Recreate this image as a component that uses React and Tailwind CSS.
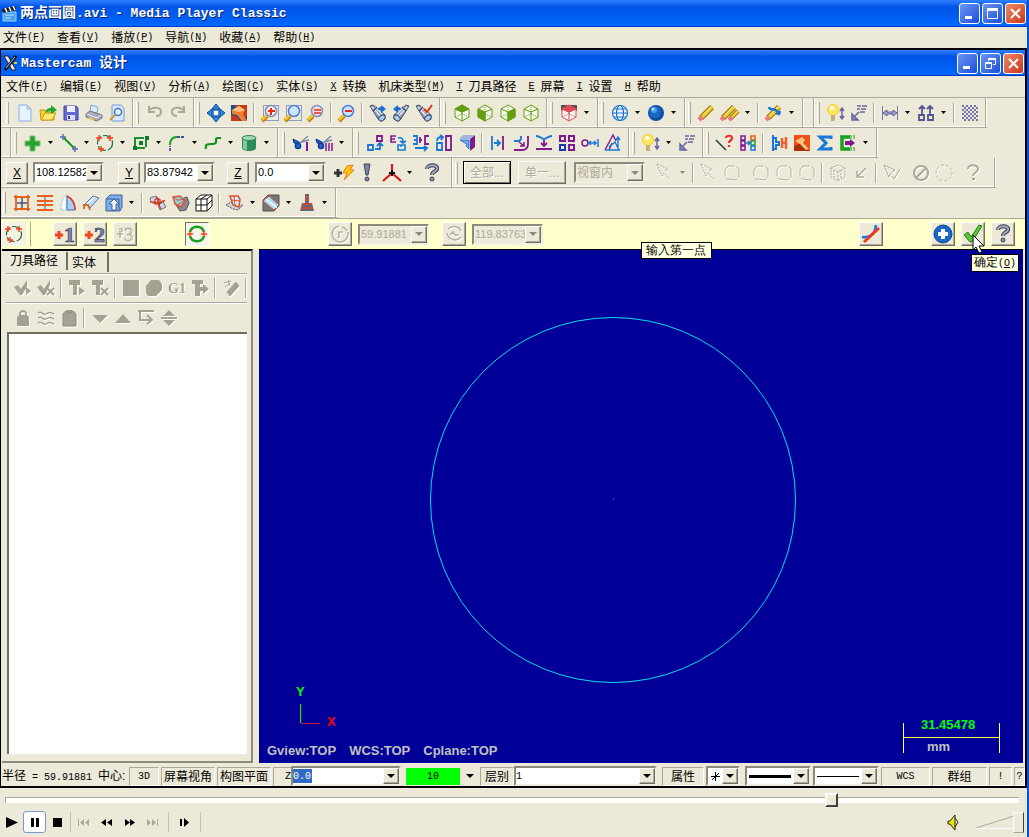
import React from 'react';
import clsx from 'clsx';

const hex = 'M2 5L9 1L16 5V13L9 17L2 13Z';
const cubeLines = 'M2 5L9 8L16 5M9 8V17';

const Lens = ({ color = '#4a7fd8', fill = '#cfe4ff' }) => (
  <>
    <path d="M1 17L6 12" stroke="#b87810" strokeWidth="4" />
    <path d="M1 16L6 11" stroke="#f8c428" strokeWidth="2.500" />
    <circle cx="10" cy="7" r="5.500" fill={fill} stroke={color} strokeWidth="1.500" />
  </>
);

const Binoculars = () => (
  <>
    <path d="M1 2L4 1L8 4L16 11L16 15L12 17L9 15Z" fill="#8c98b4" stroke="#4a5470" />
    <path d="M3 3L12 13M6 3L14 11" stroke="#e4e8f2" strokeWidth="1.500" />
    <path d="M4 7L8 3" stroke="#3c4868" strokeWidth="1.500" />
    <ellipse cx="13" cy="14" rx="3.500" ry="2.500" transform="rotate(-40 13 14)" fill="#a8d0f4" stroke="#3c4868" />
  </>
);

const Cube = ({ face, color = '#62a010' }) => (
  <g stroke={color} fill="none" strokeWidth="1">
    <path d={hex} fill="#f6f7ec" />
    {face && <path d={face} fill={color} />}
    <path d={cubeLines} />
    <path d="M2 13L9 10L16 13M9 1V10" strokeDasharray="1 1" />
  </g>
);

const Pencil = ({ x = 0 }) => (
  <g transform={`translate(${x} 0)`}>
    <path d="M3 14L14 3" stroke="#8c6c10" strokeWidth="5.500" />
    <path d="M4 13L14 3" stroke="#f4cc28" strokeWidth="3.500" />
    <path d="M5 11L13 3" stroke="#fff090" />
    <path d="M1 16L4 13" stroke="#f07880" strokeWidth="4.500" />
  </g>
);

const Plus = ({ x, y, c = '#ff3a10' }) => (
  <path d={`M${x - 3} ${y}h6M${x} ${y - 3}v6`} stroke={c} strokeWidth="1.400" />
);

const Bulb = () => (
  <>
    <circle cx="6" cy="6" r="5.500" fill="#ffe860" stroke="#f0d020" />
    <circle cx="5" cy="4" r="2" fill="#fff" />
    <path d="M4 11h4v6H4z" fill="#c4b078" />
    <path d="M15 4v11M13 7l2-3 2 3M13 12l2 3 2-3" stroke="#6466a0" strokeWidth="1.500" fill="none" />
  </>
);

const Scissors = () => (
  <>
    <path d="M7 10L16 2M6 9L17 6" stroke="#7c8cac" strokeWidth="1.500" />
    <path d="M1 5L7 8L6 10L2 9Z" fill="#1c58c0" stroke="#0a3c98" />
    <circle cx="6" cy="12" r="2.600" fill="#2464cc" stroke="#0a3c98" strokeWidth="1.400" />
  </>
);

const icons = {
  page: <path d="M3 1h8l4 4v12H3zM11 1v4h4" fill="#e6f3ff" stroke="#86aee0" />,
  open: (
    <>
      <path d="M1 6h5l2 2h7v8H2z" fill="#f7d034" stroke="#c69a10" />
      <path d="M2 16L6 9H17L13 16Z" fill="#ffe873" stroke="#c69a10" />
      <path d="M6 9C7 5 9 4 12 4V1L18 6L12 10V7C9 7 8 8 6 9" fill="#28a428" />
    </>
  ),
  save: (
    <>
      <path d="M2 2h12l2 2v12H2z" fill="#6468d0" stroke="#3c40a4" />
      <path d="M5 2h8v6H5z" fill="#eef" />
      <path d="M5 11h8v5H5z" fill="#d8dcf8" />
      <path d="M7 12v3" stroke="#30349c" strokeWidth="2" />
    </>
  ),
  print: (
    <>
      <path d="M5 8L6 1L13 3L12 9Z" fill="#d8ecff" stroke="#7fa8dc" />
      <path d="M1 10L5 7L17 11V14L12 17L1 13Z" fill="#a9acb8" stroke="#70737f" />
      <path d="M2 10L12 14L16 11" stroke="#eef" fill="none" />
      <path d="M4 14L9 16" stroke="#f0d040" strokeWidth="1.500" />
    </>
  ),
  preview: (
    <>
      <path d="M4 1h9l3 3v13H4z" fill="#d6e9ff" stroke="#6f9edc" />
      <circle cx="10" cy="8" r="3.500" fill="#f2faff" stroke="#3f77c4" strokeWidth="1.500" />
      <path d="M7 11L2 16" stroke="#d89820" strokeWidth="2" />
    </>
  ),
  undo: <path d="M3 7C6 2 16 3 15 8C15 11 13 12 10 12M3 2V8H9" fill="none" stroke="#aca899" strokeWidth="2" />,
  redo: <path d="M15 7C12 2 2 3 3 8C3 11 5 12 8 12M15 2V8H9" fill="none" stroke="#aca899" strokeWidth="2" />,
  pan: (
    <>
      <path d="M9 0L13 5H5ZM9 18L13 13H5ZM0 9L5 5V13ZM18 9L13 5V13Z" fill="#2c88e8" stroke="#0c4c9c" />
      <path d="M6 6h6v6H6z" fill="#fff" stroke="#1464b8" strokeWidth="1.500" />
    </>
  ),
  repaint: (
    <>
      <path d="M1 1h16v16H1z" fill="#1c4a94" />
      <path d="M5 1H17V12L12 15L8 12Z" fill="#c83c14" />
      <path d="M2 6L9 2L15 6L13 10L17 17H12L7 11L2 10Z" fill="#f08030" />
      <path d="M2 6L9 2L15 6L9 8Z" fill="#ffc080" />
      <path d="M1 11L6 12L11 17H1Z" fill="#c83c14" />
    </>
  ),
  zoomWindow: (
    <>
      <path d="M2.500 1.500h15v15H2.500z" fill="none" stroke="#2858b0" strokeDasharray="1 1" />
      <Lens color="#7890c8" fill="#ffeee8" />
      <path d="M10 4v7M7 7h7" stroke="#f02810" strokeWidth="2" />
    </>
  ),
  zoomTarget: (
    <>
      <path d="M2.500 1.500h15v15H2.500z" fill="none" stroke="#2858b0" strokeDasharray="1 1" />
      <Lens />
    </>
  ),
  unzoom: (
    <>
      <Lens color="#7890c8" fill="#ffdcd8" />
      <path d="M7 6h7M7 9h7" stroke="#f02820" strokeWidth="1.500" />
    </>
  ),
  unzoomBlue: (
    <>
      <Lens />
      <path d="M7 7h7" stroke="#e02828" strokeWidth="2" />
    </>
  ),
  binoRight: (
    <>
      <Binoculars />
      <path d="M9 6c0-2 1-3 3-3V1l5 4-5 4V6z" fill="#1c6cd0" />
    </>
  ),
  binoLeft: (
    <>
      <g transform="translate(18 0) scale(-1 1)"><Binoculars /></g>
      <path d="M9 6c0-2-1-3-3-3V1L1 5l5 4V6z" fill="#1c6cd0" />
    </>
  ),
  binoCheck: (
    <>
      <Binoculars />
      <path d="M9 5l3 3 5-7" stroke="#d83818" strokeWidth="2" fill="none" />
    </>
  ),
  cubeTop: <Cube face="M2 5L9 1L16 5L9 8Z" />,
  cubeFront: <Cube face="M2 5L9 8V17L2 13Z" />,
  cubeSide: <Cube face="M9 8L16 5V13L9 17Z" />,
  cubeWire: <Cube />,
  cubeRed: (
    <>
      <path d="M1 1h16v6H1z" fill="#555" />
      <Cube color="#e04858" face="M2 5L9 2L16 5L9 8Z" />
    </>
  ),
  globe: (
    <g fill="none" stroke="#1874d0" strokeWidth="1.200">
      <circle cx="9" cy="9" r="7.500" fill="#f2f8ff" />
      <ellipse cx="9" cy="9" rx="3.500" ry="7.500" />
      <path d="M2 9h14M3 5h12M3 13h12" />
    </g>
  ),
  sphere: (
    <>
      <circle cx="9" cy="9" r="8" fill="#0c50a4" />
      <circle cx="8" cy="8" r="6" fill="#1c68c0" />
      <circle cx="7" cy="6" r="3" fill="#4c98e4" />
      <circle cx="6" cy="5" r="1.500" fill="#b4dcff" />
    </>
  ),
  pencil: <Pencil />,
  pencils: (
    <>
      <Pencil x={-1} />
      <path d="M9 15L17 7" stroke="#8c6c10" strokeWidth="4.500" />
      <path d="M10 14L17 7" stroke="#f4cc28" strokeWidth="2.500" />
      <path d="M8 16L11 13" stroke="#f07880" strokeWidth="4" />
    </>
  ),
  pencilUndo: (
    <>
      <Pencil />
      <path d="M4 3C5 8 10 2 13 9M11 9l3 1 1-3" stroke="#1c74d4" strokeWidth="2.500" fill="none" />
    </>
  ),
  bulb: <Bulb />,
  note: (
    <>
      <path d="M7 2h4M12 2h5M7 5h3M11 5h5M10 8h5" stroke="#6466a0" strokeWidth="1.400" />
      <path d="M9 8L4 13M2 10v6h6z" stroke="#6466a0" strokeWidth="1.500" fill="#8a8cc0" />
    </>
  ),
  dim: (
    <>
      <path d="M1.500 2v14M16.500 2v14" stroke="#7678a8" />
      <path d="M2 9l4-3v2h6V6l4 3-4 3v-2H6v2z" fill="#a0a2d0" stroke="#5c5e9c" />
    </>
  ),
  upArrows: (
    <g fill="none" stroke="#54568e" strokeWidth="1.800">
      <path d="M5 11V2M2 5l3-3 3 3M13 11V2M10 5l3-3 3 3" />
      <path d="M2 11h5v5H2zM11 11h5v5h-5z" />
    </g>
  ),
  mesh: (
    <g stroke="#7276a8" strokeWidth="2" strokeDasharray="2 2" fill="none">
      {[2, 6, 10, 14].map((y) => (
        <React.Fragment key={y}>
          <path d={`M1 ${y}h16`} />
          <path d={`M3 ${y + 2}h14`} />
        </React.Fragment>
      ))}
    </g>
  ),
  point: <path d="M6 2h5v5h5v5h-5v5H6v-5H1V7h5z" fill="#2ca030" stroke="#70c870" />,
  line: (
    <>
      <path d="M4 4L14 14" stroke="#109020" strokeWidth="1.800" />
      <Plus x={3} y={3} c="#5868b0" />
      <Plus x={15} y={15} c="#5868b0" />
    </>
  ),
  arc: (
    <>
      <circle cx="9" cy="9" r="7.500" fill="none" stroke="#187040" strokeWidth="1.200" strokeDasharray="9 2" />
      <Plus x={3} y={4} />
      <Plus x={14} y={4} />
      <Plus x={5} y={15} />
    </>
  ),
  rect: (
    <>
      <path d="M3 4h11v10H3z" fill="none" stroke="#189030" strokeWidth="2" strokeDasharray="9 2" />
      <path d="M7 7h4v4H7zM1 12h4v4H1zM13 2h4v4h-4z" fill="#107828" />
    </>
  ),
  fillet: (
    <>
      <path d="M2 17V12M9 3h8" stroke="#4850a0" strokeWidth="1.800" strokeDasharray="3 1" />
      <path d="M2 11C2 6 4 3 9 3" stroke="#18a028" strokeWidth="2" fill="none" />
    </>
  ),
  spline: <path d="M2 15C1 10 3 10 8 10C16 10 9 4 14 4H17" fill="none" stroke="#109020" strokeWidth="2.200" />,
  solid: (
    <>
      <path d="M2 4v10c0 4 14 4 14 0V4z" fill="#2c8c54" />
      <path d="M3 5v10l4 1V5z" fill="#80c89c" />
      <ellipse cx="9" cy="4" rx="7" ry="2.500" fill="#9cd8b0" stroke="#348858" />
    </>
  ),
  trim: (
    <>
      <Scissors />
      <path d="M15 8v9" stroke="#801890" strokeWidth="2" />
    </>
  ),
  trimMany: (
    <>
      <Scissors />
      <path d="M11 9v8M14 9v8M17 9v8" stroke="#801890" strokeWidth="1.500" />
    </>
  ),
  xformTranslate: (
    <g fill="none" strokeWidth="1.800">
      <path d="M11 2h5v5h-5z" stroke="#801890" />
      <path d="M2 11h5v5H2z" stroke="#1878d8" />
      <path d="M9 15h5v-5M11 12l3-3 3 3" stroke="#1878d8" />
    </g>
  ),
  xform3d: (
    <g fill="none" strokeWidth="1.600">
      <path d="M7 2H2v6h5M2 5h4" stroke="#801890" />
      <path d="M9 11h7v5H9zM12 11v2M9 4c4-1 5 1 5 4M11 7l3 2 3-2" stroke="#1878d8" />
    </g>
  ),
  xformMirror: (
    <g fill="none" strokeWidth="1.800">
      <path d="M1 2h4v8H1M2 6h3M3 14h12M12 12l3 2-3 3" stroke="#1878d8" />
      <path d="M17 2h-4v8h4M8 3v6M7 6h3" stroke="#801890" />
    </g>
  ),
  xformRotate: (
    <g fill="none" strokeWidth="1.800">
      <path d="M11 2h5v14h-5z" stroke="#801890" />
      <path d="M2 9h5v7H2zM2 7C2 4 4 3 7 3M5 1l3 2-2 3" stroke="#1878d8" />
    </g>
  ),
  xformScale: (
    <>
      <path d="M12 5L17 1V13L12 17Z" fill="#801890" />
      <path d="M1 5L5 1H17L12 5Z" fill="#a0b8e0" />
      <path d="M2 6H11V15L8 12L9 10L5 8Z" fill="#70a8f0" stroke="#1868c8" strokeWidth=".8" />
    </>
  ),
  offset: (
    <g strokeWidth="1.800" fill="none">
      <path d="M3 2v14M5 9h6M8 6l3 3-3 3" stroke="#1878d8" />
      <path d="M14 2v14" stroke="#801890" />
    </g>
  ),
  offsetContour: (
    <g strokeWidth="1.800" fill="none">
      <path d="M16 2v8c0 4-2 6-6 6H2" stroke="#801890" />
      <path d="M9 2v2c0 2-1 3-3 3H2" stroke="#1878d8" />
      <path d="M7 8l5 4M12 8v4H8" stroke="#801890" strokeWidth="1.500" />
    </g>
  ),
  project: (
    <g strokeWidth="1.800" fill="none">
      <path d="M1 2c5 0 5 3 8 3s3-3 8-3" stroke="#1878d8" />
      <path d="M9 6v6M6 9l3 3 3-3M1 15h16" stroke="#801890" />
    </g>
  ),
  array: (
    <g strokeWidth="2" fill="none">
      <path d="M2 2h5v5H2zM11 2h5v5h-5zM11 11h5v5h-5z" stroke="#801890" />
      <path d="M2 11h5v5H2z" stroke="#1838b8" />
    </g>
  ),
  drag: (
    <g strokeWidth="1.500" fill="none">
      <circle cx="4" cy="9" r="3" stroke="#801890" />
      <path d="M8 9h7M10 7L8 9l2 2M13 7l2 2-2 2M17 5v8" stroke="#1878d8" />
    </g>
  ),
  stretch: (
    <g strokeWidth="1.400" fill="none">
      <path d="M1 16L9 1L12 7M5 16L8 9" stroke="#801890" />
      <path d="M1 16H16M5 13L11 8L15 16M14 13V4M12 6l2-3 2 3" stroke="#1878d8" />
    </g>
  ),
  analyze: (
    <>
      <path d="M0 6L10 16" stroke="#184838" strokeWidth="1.500" />
      <path d="M10 4c0-3 6-3 6 0c0 3-3 2-3 5M13 11v2" stroke="#f03018" strokeWidth="2.200" fill="none" />
    </>
  ),
  compare: (
    <g fill="none" strokeWidth="1.500">
      <path d="M2 2h4v4H2zM2 7h4v4H2zM2 12h4v4H2z" stroke="#801890" />
      <path d="M12 2h4v4h-4z" stroke="#f05020" />
      <path d="M12 7h4v4h-4z" stroke="#20a030" />
      <path d="M12 12h4v4h-4zM7 9h4M9 7l2 2-2 2" stroke="#1878d8" />
    </g>
  ),
  join: (
    <>
      <path d="M3 1v16M3 4h3v4h3v3H6v4H3" stroke="#1878d8" strokeWidth="2" fill="none" />
      <path d="M16 3v12M12 4v10M17 9h-6" stroke="#f06020" strokeWidth="2.400" fill="none" />
    </>
  ),
  shade: (
    <>
      <path d="M1 1h16v16H1z" fill="#f05018" />
      <path d="M1 17V12L8 9L17 17Z" fill="#a83008" />
      <path d="M2 7L9 3L12 6L10 9L16 15L13 16L7 10Z" fill="#f8c480" />
    </>
  ),
  sigma: <path d="M15 5V3H4L10 9L4 15H15V13" fill="none" stroke="#1878d8" strokeWidth="3" />,
  cplane: (
    <>
      <path d="M11 3H3v12h8" stroke="#18a020" strokeWidth="3.500" fill="none" />
      <path d="M12 1v4M15 1v4M12 13v4M15 13v4" stroke="#18a020" />
      <path d="M6 9h6" stroke="#801890" strokeWidth="4" />
      <path d="M11 5l5 4-5 4z" fill="#801890" />
    </>
  ),
  flash: (
    <>
      <path d="M-1 9h8M3 5v8" stroke="#333" strokeWidth="3" />
      <path d="M12 2L18 1L15 6H19L9 16L12 9H8Z" fill="#ffc800" stroke="#f07818" />
    </>
  ),
  bang: (
    <>
      <path d="M6 0h6l-2 11H8z" fill="#7e86a0" stroke="#3c4258" />
      <circle cx="9" cy="15" r="2" fill="#7e86a0" stroke="#3c4258" />
    </>
  ),
  axes: (
    <>
      <path d="M9 0v9M9 9L0 17M9 9l9 8" stroke="#d81818" strokeWidth="2.200" />
      <path d="M6 9h6M9 6v6" stroke="#111" strokeWidth="2" />
    </>
  ),
  help: (
    <>
      <path d="M4 5c0-5 11-5 10 0c-1 3-5 2-5 6" fill="none" stroke="#3c4258" strokeWidth="4" />
      <path d="M4 5c0-5 11-5 10 0c-1 3-5 2-5 6" fill="none" stroke="#a4abc2" strokeWidth="2" />
      <circle cx="9" cy="15" r="2" fill="#8a92ac" stroke="#3c4258" />
    </>
  ),
  surfGrid: (
    <>
      <path d="M9 3v12M3 9h12" stroke="#405880" strokeWidth="1.500" />
      <path d="M3 1v16M15 1v16M1 3h16M1 15h16" stroke="#e86020" strokeWidth="1.800" />
    </>
  ),
  surfRuled: (
    <>
      <path d="M9 2v14" stroke="#405880" />
      <path d="M1 2h16M1 7h16M1 11h16M1 16h16" stroke="#e86020" strokeWidth="1.800" />
    </>
  ),
  surfRevolve: (
    <>
      <path d="M8 1C3 3 2 9 2 16H7z" fill="#f4faff" stroke="#9cc0e4" strokeDasharray="2 1" />
      <path d="M8 2c6 3 8 9 8 14H8z" fill="#a8d0f4" stroke="#3b6fb4" />
      <path d="M8 2c6 3 8 9 8 14" fill="none" stroke="#e04028" strokeWidth="1.800" />
    </>
  ),
  surfSweep: (
    <>
      <path d="M2 11L11 2L17 4L8 14L6 11Z" fill="#bcdcf8" stroke="#5070a0" />
      <path d="M2 15V11H6L8 16" fill="none" stroke="#e06028" strokeWidth="1.800" />
      <path d="M5 10L13 3" stroke="#fff" strokeWidth="1.500" />
    </>
  ),
  surfOffset: (
    <>
      <path d="M1 5L5 1h12v12l-2 4H1z" fill="#7cb0ec" stroke="#405e98" />
      <path d="M2 5h12v11" fill="none" stroke="#405e98" />
      <path d="M9 5l5 5h-3v6H7v-6H4z" fill="#fff" stroke="#405e98" />
    </>
  ),
  surfTrim: (
    <>
      <path d="M1 4l6-2 3 4-4 4-4-2zM9 11l5-3 3 5-6 3z" fill="#c8dcf0" stroke="#777" />
      <path d="M1 8c4 0 5 0 8 1s4-3 7-2M7 3c4 2 1 8 5 12" stroke="#e04028" strokeWidth="1.600" fill="none" />
      <path d="M6 5h5v5H6z" stroke="#c02020" fill="none" />
    </>
  ),
  surfSplit: (
    <>
      <path d="M9 5l6-2 2 6-3 7-6 1-4-6z" fill="#889" stroke="#555" />
      <path d="M1 3l7-1 5 5-4 6-6-3z" fill="#8cd0d8" stroke="#e05030" strokeWidth="1.400" />
      <path d="M2 3c4 6 6 1 10 3M4 12l8-5" stroke="#e05030" fill="none" />
    </>
  ),
  cubeBlack: <path d="M1 5L6 1H17V12L12 17H1zM1 5H12V17M12 5L17 1M6 5V17M1 11H12L17 6M12 1L6 5" fill="#fff" stroke="#111" />,
  surfFillet: (
    <>
      <path d="M0 11L5 8L9 12L17 11L12 16L7 15Z" fill="#c4d0dc" stroke="#555" strokeDasharray="2 1" />
      <path d="M4 2H12L14 5L13 13L7 11Z" fill="#d0ecff" stroke="#e05028" strokeWidth="1.500" />
      <path d="M8 2L9 12M5 6L14 7" stroke="#e05028" />
    </>
  ),
  surfBlend: (
    <>
      <path d="M1 6L6 1H17V12L12 17H1Z" fill="#777" stroke="#555" />
      <path d="M1 7L7 2L17 11L12 16Z" fill="#a8dcff" stroke="#e05028" />
      <path d="M4 5L15 14" stroke="#fff" strokeWidth="1.500" />
    </>
  ),
  surfStack: (
    <>
      <path d="M7 0h4v9H7zM4 9h10l2 8H2z" fill="#667" />
      <path d="M7 3h4M7 6h4M4 10h10M3 14h12" stroke="#e04828" strokeWidth="1.400" />
    </>
  ),
  plusOne: (
    <>
      <path d="M-1 10h8M3 6v8" stroke="#f04818" strokeWidth="3" />
      <text x="8" y="17" fontSize="22" fontWeight="bold" fontFamily="Liberation Serif" fill="#8088a8" stroke="#353b58" strokeWidth=".7">1</text>
    </>
  ),
  plusTwo: (
    <>
      <path d="M-1 10h8M3 6v8" stroke="#f04818" strokeWidth="3" />
      <text x="8" y="17" fontSize="22" fontWeight="bold" fontFamily="Liberation Serif" fill="#8088a8" stroke="#353b58" strokeWidth=".7">2</text>
    </>
  ),
  plusThree: (
    <>
      <path d="M3 4h3v3M1 9h6M4 6v7" stroke="#b4b09f" strokeWidth="1.500" fill="none" />
      <text x="8" y="16" fontSize="19" fontFamily="Liberation Serif" fill="#f4f2e8" stroke="#b4b09f" strokeWidth=".8">3</text>
    </>
  ),
  editCircle: (
    <>
      <path d="M2 7C4 0 14 0 16 7M2 11C4 18 14 18 16 11" fill="none" stroke="#18a020" strokeWidth="2.600" />
      <Plus x={2} y={9} />
      <Plus x={16} y={9} />
    </>
  ),
  radius: <path d="M8 1a8 8 0 1 0 9 6M8 13V7h4M11 2a8 8 0 0 1 5 4" fill="none" stroke="#b4b09f" strokeWidth="1.500" />,
  diameter: <path d="M3 4a8 8 0 0 1 13 2M2 8a8 8 0 0 0 14 4M5 10l3-3 2 3h4" fill="none" stroke="#b4b09f" strokeWidth="1.500" />,
  tangent: (
    <>
      <path d="M0 12C9 13 13 9 14 0" fill="none" stroke="#1878e0" strokeWidth="2.500" />
      <path d="M2 17L17 3" stroke="#f03818" strokeWidth="3" />
    </>
  ),
  apply: (
    <>
      <circle cx="9" cy="9" r="9" fill="#1868c8" stroke="#0c488c" />
      <path d="M9 4v10M4 9h10" stroke="#fff" strokeWidth="4" />
    </>
  ),
  ok: <path d="M0 10L4 7L7 12L15 0L18 1L8 17H6Z" fill="#58c838" stroke="#288010" />,
  // greyed-out selection tools
  selArrow: <path d="M1 0L6 12L8 9L14 15M1 0L12 5L9 7" fill="none" stroke="#aca899" strokeDasharray="2 1" />,
  selHex: <path d="M2 6L5 2H13L16 5V13L13 16L4 15L2 13Z" fill="none" stroke="#b8b4a4" strokeDasharray="12 2" />,
  selCube: <path d="M2 4L9 1L16 4V13L9 17L2 13ZM2 4L9 8L16 4M9 8V17M5 6v9M12 6v9" fill="none" stroke="#aca899" strokeDasharray="2 1" />,
  selBack: <path d="M14 4L6 12M5 7v6h7" fill="none" stroke="#aca899" strokeWidth="1.500" />,
  selCheck: <path d="M1 1L6 13L8 9M1 1L12 6L9 8M9 12l2 3 6-10" fill="none" stroke="#aca899" />,
  selNone: <path d="M9 2a7 7 0 1 0 .1 0M4 14L14 4" fill="none" stroke="#aca899" strokeWidth="2" />,
  selRing: <path d="M9 1a8 8 0 1 0 .1 0" fill="none" stroke="#b8b4a4" strokeDasharray="3 2" />,
  selHelp: <path d="M4 5c0-5 10-5 10 0c0 4-5 3-5 7M8 15h3" fill="none" stroke="#aca899" strokeWidth="2" />,
  // operations manager
  opCheck: <path d="M0 8L4 6L7 10L13 1V8L8 16H6ZM12 8l5 4-5 4z" fill="#a5a292" />,
  opCheckX: (
    <>
      <path d="M0 8L4 6L7 10L13 1V6L8 16H6Z" fill="#a5a292" />
      <path d="M10 9l7 7M17 9l-7 7" stroke="#a5a292" strokeWidth="2" />
    </>
  ),
  opTool: <path d="M1 1h11v5H9v10H5V6H1zM11 8l6 4-6 4z" fill="#a5a292" />,
  opToolX: (
    <>
      <path d="M1 1h11v5H9v10H5V6H1z" fill="#a5a292" />
      <path d="M10 9l7 7M17 9l-7 7" stroke="#a5a292" strokeWidth="2" />
    </>
  ),
  opSquare: <path d="M1 1h16v16H1z" fill="#a5a292" />,
  opPoly: <path d="M1 7L6 1H14L17 5V11L11 17H3L1 14Z" fill="#a5a292" />,
  opG1: <text x="0" y="14" fontSize="14" fontWeight="bold" fontFamily="Liberation Serif" fill="#a5a292">G1</text>,
  opSend: <path d="M1 1h11v4H9v12H4V5H1zM8 8h4V5l6 5-6 5v-3H8z" fill="#a5a292" />,
  opErase: (
    <>
      <path d="M5 13L14 3L17 7L8 17Z" fill="#a5a292" stroke="#a5a292" />
      <path d="M2 4l7-2M3 8l5-4M6 1l2 6" stroke="#a5a292" />
    </>
  ),
  opLock: <path d="M3 17V8L5 6V4C6 0 12 0 13 4V6L15 8V17ZM7 6V4C7 3 11 3 11 4V6Z" fill="#a5a292" fillRule="evenodd" />,
  opWave: <path d="M1 4c4-3 5 3 8 1s4-2 8 0M1 9c4-3 5 3 8 1s4-2 8 0M1 14c4-3 5 3 8 1s4-2 8 0" fill="none" stroke="#a5a292" strokeWidth="1.500" />,
  opGhost: <path d="M3 17V6C3 0 16 0 16 6V17ZM6 6l2-2 4-1" fill="#a5a292" stroke="#8d8a7c" />,
  opDown: <path d="M1 6h16l-8 8z" fill="#a5a292" />,
  opUp: <path d="M1 14h16L9 5z" fill="#a5a292" />,
  opLoop: <path d="M1 2h16M3 2v9h11M10 6l5 5-5 4" fill="none" stroke="#a5a292" strokeWidth="2" />,
  opSplit: <path d="M3 7h12L9 1zM3 11h12l-6 6zM1 8h16v2H1z" fill="#a5a292" />,
};

function Icon({ name, dim }) {
  return (
    <svg
      width="18"
      height="18"
      viewBox="0 0 18 18"
      aria-hidden="true"
      className={clsx('shrink-0 overflow-visible', dim && 'drop-shadow-[1px_1px_0_#ffffff]')}
    >
      {icons[name]}
    </svg>
  );
}

function Caret({ dim, big }) {
  return (
    <svg width={big ? 8 : 5} height={big ? 4 : 3} viewBox="0 0 8 4" preserveAspectRatio="none" aria-hidden="true">
      <path d="M0 0H8L4 4Z" fill={dim ? '#8d8a7c' : '#000'} />
    </svg>
  );
}

const Sep = () => (
  <span className="flex w-2 shrink-0 justify-center">
    <span className="h-5 w-[2px] border-l border-[#aca899] bg-white" />
  </span>
);

// '|' draws a divider, 'v' the small arrow of a split button
function Items({ list, dim }) {
  return list.split(' ').map((name, i) => {
    if (name === '|') return <Sep key={i} />;
    if (name === 'v') {
      return (
        <button key={i} aria-label="more" className="flex h-6 w-[13px] shrink-0 items-center justify-center">
          <Caret dim={dim} />
        </button>
      );
    }
    return (
      <button key={i} aria-label={name} className="flex h-6 w-[23px] shrink-0 items-center justify-center">
        <Icon name={name} dim={dim} />
      </button>
    );
  });
}

const Grip = () => <span className="mr-1 h-[22px] w-[3px] shrink-0 border-r border-l border-l-white border-r-[#aca899]" />;

function Group({ children, className }) {
  return (
    <div className={clsx('flex h-[30px] shrink-0 items-center border-b border-[#aca899] pr-1 pl-[2px] shadow-[inset_0_-1px_0_#ffffff]', className)}>
      {children}
      <span className="-mr-1 ml-1 h-full w-[2px] border-l border-[#aca899] bg-white" />
    </div>
  );
}

function Bar({ list, className }) {
  return (
    <Group className={className}>
      <Grip />
      <Items list={list} />
    </Group>
  );
}

const sunken = 'border-2 border-t-[#8d8a7c] border-l-[#8d8a7c] border-r-[#f1efe2] border-b-[#f1efe2]';
const raised = 'border border-t-white border-l-white border-r-[#716f64] border-b-[#716f64] bg-[#ece9d8] shadow-[inset_-1px_-1px_0_#aca899]';
const mono = "font-['Liberation_Mono','Noto_Sans_CJK_SC',monospace]";

function DropButton({ dim, label }) {
  return (
    <button aria-label={label} className={clsx('flex w-4 shrink-0 items-center justify-center', raised)}>
      <Caret dim={dim} big />
    </button>
  );
}

function Combo({ label, value, dim, className = 'w-[71px]' }) {
  return (
    <div className={clsx('flex h-[21px] shrink-0', sunken, dim ? 'bg-[#ece9d8]' : 'bg-white', className)}>
      <input
        aria-label={label}
        defaultValue={value}
        disabled={dim}
        className={clsx("w-0 min-w-0 flex-1 bg-transparent pl-px font-['Liberation_Sans',sans-serif] text-[11px]", dim ? 'text-[#aca899]' : 'text-black')}
      />
      <DropButton dim={dim} label={`${label} list`} />
    </div>
  );
}

function ToolButton({ icon, dim, pressed }) {
  return (
    <button
      aria-label={icon}
      className={clsx('flex size-6 shrink-0 items-center justify-center', pressed ? 'border border-t-[#716f64] border-l-[#716f64] border-r-white border-b-white bg-[#f6f4ea]' : raised)}
    >
      <Icon name={icon} dim={dim} />
    </button>
  );
}

function MenuItem({ text, hot, lead }) {
  const key = (
    <span className={clsx('text-[10px]', mono)}>
      {lead ? <><u>{hot}</u>{' '}</> : <>(<u>{hot}</u>)</>}
    </span>
  );
  return (
    <button className="flex shrink-0 items-center whitespace-pre leading-5">
      {lead && key}
      {text}
      {!lead && key}
    </button>
  );
}

function WindowButtons({ restore }) {
  const cls = 'flex size-[21px] items-center justify-center rounded-[3px] border border-white';
  return (
    <div className="ml-auto flex gap-[2px]">
      <button aria-label="minimize" className={clsx(cls, 'bg-linear-to-br from-[#6c94f4] to-[#1c4cd8]')}>
        <svg width="15" height="15" viewBox="0 0 15 15"><path d="M3 10h7v3H3z" fill="#fff" /></svg>
      </button>
      <button aria-label="maximize" className={clsx(cls, 'bg-linear-to-br from-[#6c94f4] to-[#1c4cd8]')}>
        <svg width="15" height="15" viewBox="0 0 15 15" fill="none" stroke="#fff">
          {restore ? (
            <path d="M5.500 5V2.500h7v6H10M5 3.500h8M2.500 6.500h6v6h-6zM2 7.500h7" />
          ) : (
            <path d="M2.500 3.500h10v9h-10zM2 4.500h11M2 2.500h11" />
          )}
        </svg>
      </button>
      <button aria-label="close" className={clsx(cls, 'bg-linear-to-br from-[#f08868] to-[#c83410]')}>
        <svg width="15" height="15" viewBox="0 0 15 15"><path d="M3 3l9 9M12 3l-9 9" stroke="#fff" strokeWidth="2" /></svg>
      </button>
    </div>
  );
}

function TitleBar({ children, icon, restore, className }) {
  return (
    <header className={clsx('flex items-center bg-linear-to-b from-[#2f80ff] via-[#0054e8] via-25% to-[#0068ff] pr-px pl-[2px] text-[13px] font-bold text-white shadow-[inset_0_-1px_0_#0038c0]', className)}>
      {icon}
      <h1 className={clsx('pl-[3px] whitespace-pre [text-shadow:1px_1px_0_#0a246a]', mono)}>{children}</h1>
      <WindowButtons restore={restore} />
    </header>
  );
}

const playerMenu = [['文件', 'F'], ['查看', 'V'], ['播放', 'P'], ['导航', 'N'], ['收藏', 'A'], ['帮助', 'H']];
const camMenu = [
  ['文件', 'F'], ['编辑', 'E'], ['视图', 'V'], ['分析', 'A'], ['绘图', 'C'], ['实体', 'S'],
  ['转换', 'X', true], ['机床类型', 'M'], ['刀具路径', 'T', true], ['屏幕', 'E', true], ['设置', 'I', true], ['帮助', 'H', true],
];

function Menu({ items, className }) {
  return (
    <nav className={clsx('flex items-center gap-3', className)}>
      {items.map(([text, hot, lead]) => (
        <MenuItem key={text + hot} text={text} hot={hot} lead={lead} />
      ))}
    </nav>
  );
}

function Toolbars() {
  const axisButton = clsx("h-[22px] w-[22px] shrink-0 font-['Liberation_Sans',sans-serif] text-[12px] underline", raised);
  const wide = 'h-[23px] w-12 shrink-0 bg-[#ece9d8] text-[12px] text-[#aca899] [text-shadow:1px_1px_0_#fff]';
  return (
    <div className="border-t border-[#aca899]">
      <div className="flex">
        <Bar className="pl-[5px]" list="page open save print preview" />
        <Bar list="undo redo" />
        <Bar list="pan repaint | zoomWindow zoomTarget unzoom | unzoomBlue | binoRight binoLeft binoCheck" />
        <Bar list="cubeTop cubeFront cubeSide cubeWire" />
        <Bar list="cubeRed v" />
        <Bar list="globe v sphere v" />
        <Bar list="pencil pencils v | pencilUndo v" />
        <Group className="w-[11px] justify-end"><span /></Group>
        <Bar list="bulb note | dim v upArrows v | mesh" />
      </div>
      <div className="flex">
        <Group className="w-[11px] justify-end"><span /></Group>
        <Bar list="point v line v arc v rect v fillet v spline v solid v" />
        <Bar className="pl-[3px]" list="trim trimMany v" />
        <Bar list="xformTranslate xform3d xformMirror xformRotate xformScale | offset offsetContour project array drag stretch" />
        <Bar list="bulb v note" />
        <Bar list="analyze compare | join shade sigma cplane v" />
      </div>
      <div className="flex">
        <Group className="pl-[5px]">
          <button className={axisButton}>X</button>
          <span className="w-[5px]" />
          <Combo label="X" value="108.12582" />
          <span className="w-[14px]" />
          <button className={axisButton}>Y</button>
          <span className="w-1" />
          <Combo label="Y" value="83.87942" />
          <span className="w-3" />
          <button className={axisButton}>Z</button>
          <span className="w-[6px]" />
          <Combo label="Z" value="0.0" />
          <span className="w-[6px]" />
          <Items list="flash bang" />
          <span className="w-[2px]" />
          <Items list="axes v" />
          <span className="w-1" />
          <Items list="help" />
          <span className="w-1" />
        </Group>
        <Group>
          <Grip />
          <button disabled className={clsx(wide, 'ml-px border border-black shadow-[inset_1px_1px_0_#ffffff,inset_-1px_-1px_0_#716f64]')}>全部...</button>
          <button disabled className={clsx(wide, raised, 'ml-[7px]')}>单一...</button>
          <div className={clsx('ml-2 flex h-[21px] w-[71px] shrink-0', sunken)}>
            <select aria-label="范围" disabled className="w-0 flex-1 appearance-none bg-transparent pl-px text-[12px] leading-4 text-[#aca899] opacity-100">
              <option>视窗内</option>
            </select>
            <DropButton dim label="范围列表" />
          </div>
          <span className="w-2" />
          <Items dim list="selArrow v | selArrow selHex" />
          <span className="w-[6px]" />
          <Items dim list="selHex selHex selHex | selCube selBack | selCheck" />
          <span className="w-[6px]" />
          <Items dim list="selNone selRing" />
          <span className="w-[6px]" />
          <Items dim list="selHelp" />
          <span className="w-[6px]" />
        </Group>
      </div>
      <div className="flex">
        <Bar list="surfGrid surfRuled surfRevolve surfSweep surfOffset v | surfTrim surfSplit cubeBlack | surfFillet v surfBlend v surfStack v" />
      </div>
    </div>
  );
}

function Ribbon() {
  return (
    <div className="flex h-[31px] items-center border-t border-[#aca899] bg-[#ffffcc] pr-[10px] pl-px">
      <span className="flex size-6 items-center justify-center bg-[#f4f2e4]"><Icon name="arc" /></span>
      <span className="ml-1 h-6 w-px bg-[#aca899]" />
      <div className="ml-[22px] flex gap-[6px]">
        <ToolButton icon="plusOne" />
        <ToolButton icon="plusTwo" />
        <ToolButton icon="plusThree" dim />
      </div>
      <span className="w-12" />
      <ToolButton icon="editCircle" pressed />
      <span className="w-[119px]" />
      <ToolButton icon="radius" dim />
      <span className="w-[6px]" />
      <Combo label="半径" value="59.91881" dim />
      <span className="w-[13px]" />
      <ToolButton icon="diameter" dim />
      <span className="w-[6px]" />
      <Combo label="直径" value="119.83763" dim />
      <div className="ml-auto flex gap-[6px]">
        <ToolButton icon="tangent" />
        <span className="w-9" />
        <ToolButton icon="apply" />
        <ToolButton icon="ok" />
        <ToolButton icon="help" />
      </div>
    </div>
  );
}

function Operations() {
  return (
    <aside className="flex w-[251px] shrink-0 flex-col border-t-2 border-r-2 border-b-2 border-t-black border-r-[#8d8a7c] border-b-[#8d8a7c] p-1 pt-px pb-[7px]">
      <div className="flex h-[21px] items-start pl-1 leading-4">
        <button className="h-[18px] w-[58px] border-r-2 border-[#716f64] text-left">刀具路径</button>
        <button className="h-5 w-[41px] border-r-2 border-[#716f64] pt-px pl-1 text-left">实体</button>
      </div>
      <div className="flex h-[29px] items-center border-t border-[#aca899] pl-[5px] shadow-[inset_0_1px_0_#fff]">
        <Items dim list="opCheck opCheckX | opTool opToolX | opSquare opPoly opG1 opSend | opErase |" />
      </div>
      <div className="flex h-[30px] items-center border-t border-[#aca899] pl-[5px] shadow-[inset_0_1px_0_#fff]">
        <Items dim list="opLock opWave opGhost | opDown opUp opLoop opSplit" />
      </div>
      <div className="ml-px flex-1 border-t-2 border-l-2 border-[#716f64] bg-white" />
    </aside>
  );
}

function Viewport() {
  return (
    <main className="relative ml-[6px] flex flex-1 flex-col justify-end border-t border-black bg-[#000099] font-['Liberation_Sans',sans-serif] text-[13px] font-bold">
      <svg className="absolute inset-0 h-full w-full" viewBox="0 0 764 513" fill="none">
        <circle cx="354" cy="250" r="182.500" stroke="#00e0e8" />
        <path d="M354 249h1" stroke="#00e0e8" />
        <path d="M41.500 454v19" stroke="#00ff00" />
        <path d="M42 473.500h19" stroke="#c81040" />
      </svg>
      <span className="absolute bottom-[62px] left-[37px] text-[#00ff00]">Y</span>
      <span className="absolute bottom-8 left-[68px] text-[#ff0000]">X</span>
      <div className="relative flex items-end justify-between pr-[23px] pb-1 pl-2 text-[#c0c0c0]">
        <p className="flex gap-[13px] leading-4">
          <span>Gview:TOP</span>
          <span>WCS:TOP</span>
          <span>Cplane:TOP</span>
        </p>
        <div className="mb-[6px] w-[97px] border-r border-l border-[#ffff80] leading-3">
          <p className="-mt-1 border-b border-[#ffff40] pb-[6px] pl-[17px] text-[#00ff00]">31.45478</p>
          <p className="pt-[3px] pl-[23px]">mm</p>
        </div>
      </div>
      <div role="tooltip" className="absolute -top-2 left-[382px] border border-black bg-[#ffffe1] px-1 pr-[5px] text-[12px] leading-[15px] font-normal text-black">
        输入第一点
      </div>
      <div role="tooltip" className="absolute top-1 right-1 border border-black bg-[#ffffe1] px-[2px] text-[12px] leading-[15px] font-normal text-black">
        确定<span className={clsx('text-[10px]', mono)}>(<u>O</u>)</span>
      </div>
      <svg className="absolute -top-4 right-[38px]" width="13" height="20" viewBox="0 0 13 20" aria-hidden="true">
        <path d="M1 1V16L4 13L7 19L10 18L7 12H12Z" fill="#fff" stroke="#000" />
      </svg>
    </main>
  );
}

function Cell({ children, className }) {
  return (
    <button className={clsx('h-[19px] shrink-0 border border-t-[#aca899] border-l-[#aca899] border-r-white border-b-white whitespace-nowrap', className)}>
      {children}
    </button>
  );
}

function StylePicker({ label, width, children }) {
  return (
    <div className={clsx('relative flex h-5 shrink-0 bg-white', sunken, width)}>
      <select aria-label={label} className="absolute inset-0 appearance-none opacity-0">
        <option>{label}</option>
      </select>
      <span className="flex flex-1 items-center justify-center">{children}</span>
      <DropButton label={`${label} list`} />
    </div>
  );
}

function StatusBar() {
  const num = clsx('text-[10px]', mono);
  return (
    <footer className="flex h-[23px] items-center gap-[2px] overflow-hidden pt-[3px] pl-px whitespace-pre">
      <span className="w-[125px] shrink-0">半径<span className={num}> = 59.91881 </span>中心:</span>
      <Cell className={clsx('w-[30px]', num)}>3D</Cell>
      <Cell className="w-[54px]">屏幕视角</Cell>
      <Cell className="w-[54px]">构图平面</Cell>
      <label htmlFor="depth" className={clsx('flex h-[19px] w-[18px] items-center justify-end border-t border-l border-[#aca899]', num)}>Z</label>
      <div className={clsx('-ml-[2px] flex h-5 w-[110px] shrink-0 bg-white', sunken)}>
        <div className="flex flex-1 items-center">
          <input id="depth" defaultValue="0.0" className={clsx('h-[14px] w-[19px] bg-[#316ac5] text-white', num)} />
        </div>
        <DropButton label="depth list" />
      </div>
      <button className={clsx('ml-[3px] h-[17px] w-[54px] shrink-0 bg-[#00ff00]', num)}>10</button>
      <button aria-label="color list" className="flex h-[17px] w-4 shrink-0 items-center justify-center"><Caret big /></button>
      <Cell className="w-[34px]">层别</Cell>
      <div className={clsx('-ml-[2px] flex h-5 w-[143px] shrink-0 bg-white', sunken)}>
        <input aria-label="层别" defaultValue="1" className={clsx('w-0 flex-1', num)} />
        <DropButton label="level list" />
      </div>
      <Cell className="ml-[3px] w-[42px]">属性</Cell>
      <StylePicker label="point style" width="w-[34px]">
        <svg width="9" height="9" viewBox="0 0 9 9"><path d="M4.500 0v9M0 4.500h9M1 8l7-7" stroke="#000" /></svg>
      </StylePicker>
      <span className="w-px" />
      <StylePicker label="line style" width="w-[66px]"><span className="h-[3px] w-[42px] bg-black" /></StylePicker>
      <StylePicker label="line width" width="w-[66px]"><span className="h-px w-[42px] bg-black" /></StylePicker>
      <Cell className={clsx('w-[49px]', num)}>WCS</Cell>
      <Cell className="w-[55px]">群组</Cell>
      <Cell className={clsx('w-[23px]', num)}>!</Cell>
      <Cell className={clsx('flex-1', num)}>?</Cell>
    </footer>
  );
}

const transport = [
  ['play', 'M1 1L13 6.500L1 12Z'],
  ['pause', 'M3 2h3v9H3zM8 2h3v9H8z'],
  ['stop', 'M2 2h9v9H2z'],
  ['sep', 'mx-px'],
  ['previous', 'M1 3h1v7H1zM7 3v7L3 6.500zM12 3v7L8 6.500z', true],
  ['rewind', 'M6 3v7L1 6.500zM12 3v7L7 6.500z'],
  ['forward', 'M2 3v7l5-3.500zM7 3v7l5-3.500z'],
  ['next', 'M1 3v7l4-3.500zM6 3v7l4-3.500zM11 3h1v7h-1z', true],
  ['sep', 'mx-1'],
  ['step', 'M2 3h2v7H2zM6 2v9l5-4.500z'],
  ['sep', 'mx-1'],
];

function PlayerControls() {
  return (
    <div className="h-[49px]">
      <div className="flex h-[23px] items-center pr-2 pl-[5px]">
        <input
          type="range"
          aria-label="seek"
          min="0"
          max="1000"
          defaultValue="819"
          className="h-[6px] w-full appearance-none border-t border-l border-[#aca899] bg-white [&::-webkit-slider-thumb]:h-[14px] [&::-webkit-slider-thumb]:w-[13px] [&::-webkit-slider-thumb]:appearance-none [&::-webkit-slider-thumb]:border-2 [&::-webkit-slider-thumb]:border-t-white [&::-webkit-slider-thumb]:border-r-[#404040] [&::-webkit-slider-thumb]:border-b-[#404040] [&::-webkit-slider-thumb]:border-l-white [&::-webkit-slider-thumb]:bg-[#ece9d8]"
        />
      </div>
      <div className="flex h-[22px] items-center">
        {transport.map(([name, d, dim], i) =>
          name === 'sep' ? (
            <span key={i} className={clsx('h-5 w-px bg-[#c5c2b2]', d)} />
          ) : (
            <button
              key={name}
              aria-label={name}
              className={clsx('flex h-[22px] w-[23px] items-center justify-center', name === 'pause' && 'rounded-[3px] border border-[#7a98c8] bg-white')}
            >
              <svg width="14" height="13" viewBox="0 0 14 13"><path d={d} fill={dim ? '#aca899' : '#000'} /></svg>
            </button>
          )
        )}
        <button aria-label="mute" className="mr-4 ml-auto">
          <svg width="13" height="17" viewBox="0 0 13 17">
            <path d="M1 7h2L8 1v15L3 10H1z" fill="#e8e800" stroke="#222" />
            <path d="M8 4l3 4-3 5" fill="none" stroke="#222" />
          </svg>
        </button>
        <div className="relative mr-[3px] h-[22px] w-12">
          <svg className="absolute inset-0" width="48" height="22" viewBox="0 0 48 22">
            <path d="M0 17L38 5" stroke="#aca899" />
            <path d="M0 17.500H38" stroke="#fff" />
          </svg>
          <input
            type="range"
            aria-label="volume"
            defaultValue="100"
            className="absolute inset-0 w-full appearance-none bg-transparent [&::-webkit-slider-thumb]:h-[21px] [&::-webkit-slider-thumb]:w-[11px] [&::-webkit-slider-thumb]:appearance-none [&::-webkit-slider-thumb]:border [&::-webkit-slider-thumb]:border-t-white [&::-webkit-slider-thumb]:border-r-[#404040] [&::-webkit-slider-thumb]:border-b-[#aca899] [&::-webkit-slider-thumb]:border-l-white [&::-webkit-slider-thumb]:bg-[#ece9d8]"
          />
        </div>
      </div>
    </div>
  );
}

export default function App() {
  return (
    <div className="flex min-h-screen w-full flex-col overflow-hidden border-r-2 border-[#0054e3] bg-[#ece9d8] font-['Liberation_Sans','Noto_Sans_CJK_SC',sans-serif] text-[12px] text-black">
      <TitleBar
        className="h-[27px]"
        icon={
          <svg width="15" height="16" viewBox="0 0 15 16" aria-hidden="true">
            <path d="M1 6h13v9H1z" fill="#48a0e8" stroke="#a8d4f8" />
            <path d="M0 3L13 0L14 4L1 7Z" fill="#222" />
            <path d="M3 2l2 4M7 1l2 4M11 0l2 4" stroke="#fff" strokeWidth="1.500" />
            <path d="M3 9h9M3 12h6" stroke="#c8e8ff" />
          </svg>
        }
      >
        <span className="text-[14px]">两点画圆</span>.avi - Media Player Classic
      </TitleBar>
      <Menu items={playerMenu} className="h-[21px] pl-[3px]" />
      <section className="flex flex-1 flex-col border-t-2 border-r-2 border-b-2 border-l border-black">
        <TitleBar
          restore
          className="h-[26px]"
          icon={
            <svg width="15" height="16" viewBox="0 0 15 16" aria-hidden="true">
              <path d="M1 1h4l8 14H9z" fill="#eee" stroke="#222" />
              <path d="M13 1L2 15" stroke="#111" strokeWidth="3" />
              <path d="M12 2L3 13" stroke="#ccc" />
              <path d="M11 7h3v2h-3z" fill="#e8c020" />
            </svg>
          }
        >
          Mastercam <span className="text-[14px]">设计</span>
        </TitleBar>
        <Menu items={camMenu} className="h-[21px] pl-[5px]" />
        <Toolbars />
        <Ribbon />
        <div className="flex flex-1 pr-[2px] pl-px">
          <Operations />
          <Viewport />
        </div>
        <StatusBar />
      </section>
      <PlayerControls />
    </div>
  );
}
